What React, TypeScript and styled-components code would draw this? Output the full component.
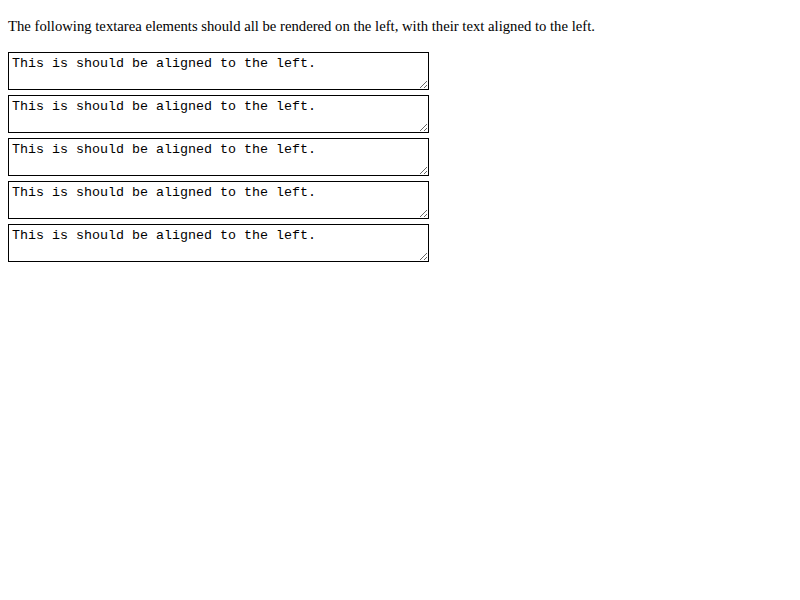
import React from 'react';
import styled, { createGlobalStyle } from 'styled-components';

const GlobalStyle = createGlobalStyle`
  html, body {
    margin: 0;
    padding: 0;
    background: #fff;
  }
  body {
    font-family: "Liberation Serif", "Times New Roman", serif;
    font-size: 16px;
    color: #000;
  }
`;

const Page = styled.div`
  padding: 17px 8px 8px;
  display: flex;
  flex-direction: column;
  align-items: flex-start;
`;

const Intro = styled.p`
  margin: 0 0 16px;
  font-size: 14.7px;
  line-height: 19px;
`;

const List = styled.div`
  display: flex;
  flex-direction: column;
  gap: 5px;
`;

const Box = styled.textarea`
  box-sizing: border-box;
  display: block;
  width: 421px;
  height: 38px;
  margin: 0;
  padding: 3px 3px 1px;
  border: 1px solid #000;
  border-radius: 0;
  font-family: "Liberation Mono", "Courier New", monospace;
  font-size: 13.33px;
  line-height: 15px;
  color: #000;
  background: #fff;
  text-align: left;
  outline: none;
`;

const rows = [0, 1, 2, 3, 4];

export default function App() {
  return (
    <>
      <GlobalStyle />
      <Page>
        <Intro>
          The following textarea elements should all be rendered on the left, with their text aligned to the left.
        </Intro>
        <List>
          {rows.map(i => (
            <Box key={i} readOnly defaultValue="This is should be aligned to the left." />
          ))}
        </List>
      </Page>
    </>
  );
}
